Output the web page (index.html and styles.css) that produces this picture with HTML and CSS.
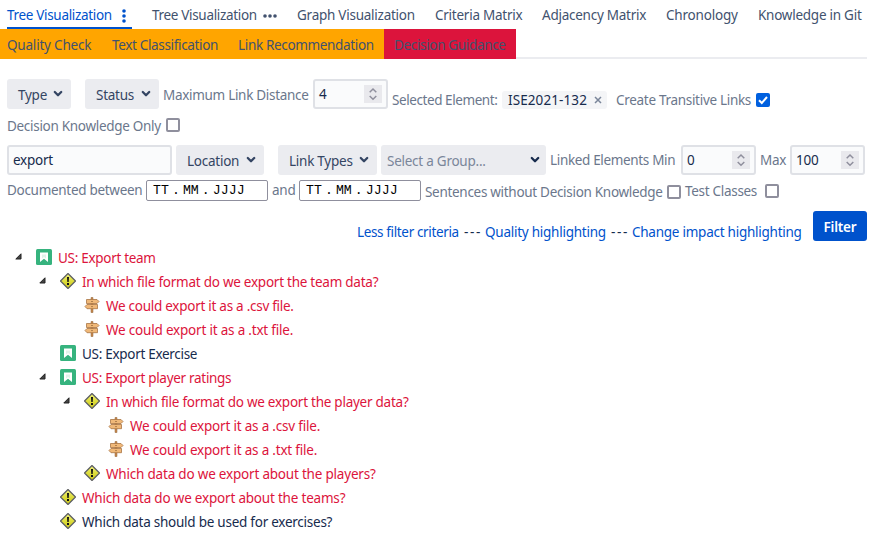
FILE: index.html
```
<!DOCTYPE html>
<html lang="en">
<head>
<meta charset="utf-8">
<title>Tree Visualization</title>
<link rel="stylesheet" href="styles.css">
</head>
<body>
<svg class="defs" width="0" height="0">
  <defs>
    <linearGradient id="yellow" x1="0" y1="0" x2="0" y2="1"><stop offset="0" stop-color="#eeee80"/><stop offset=".5" stop-color="#dede3c"/><stop offset="1" stop-color="#c9c51c"/></linearGradient>
    <symbol id="story" viewBox="0 0 16 16"><rect width="16" height="16" rx="1.5" fill="#36b37e"/><path d="M4 3.500h8v9.500L8 9.700 4 13z" fill="#fff"/><path d="M6 5.500h4v4L8 8 6 9.500z" fill="#e0f3ea"/></symbol>
    <symbol id="issue" viewBox="0 0 16 16"><path d="M8 .5 15.500 8 8 15.500.5 8z" fill="url(#yellow)" stroke="#5c5e62" stroke-width="1.200" stroke-linejoin="round"/><path d="M7 4h2l-.3 5H7.300zM7 10h2v2H7z" fill="#111"/></symbol>
    <symbol id="alt" viewBox="0 0 16 16"><path d="M7 .5h2v15H7z" fill="#c98b50" stroke="#8e6037" stroke-width=".5"/><path d="M2.500 2.500H13l2 2-2 2H2.500zM13.500 7.500H3l-2 2 2 2.200h10.500z" fill="#f0b878" stroke="#a87545" stroke-width=".8"/><path d="M7.500 4.500h1M7.500 9.600h1" stroke="#704820"/></symbol>
    <symbol id="chev" viewBox="0 0 10 8"><path d="M1.800 2 5 5.200 8.200 2" fill="none" stroke="currentColor" stroke-width="2.300" stroke-linecap="round" stroke-linejoin="round"/></symbol>
    <symbol id="spin" viewBox="0 0 18 18"><path d="M5.700 7.200 9 4l3.300 3.200M5.700 11 9 14.200l3.300-3.200" fill="none" stroke="#8f8f9d" stroke-width="1.500"/></symbol>
    <symbol id="open" viewBox="0 0 7 7"><path d="M6 .8V6H.8z" fill="#444" stroke="#222" stroke-width="1"/></symbol>
  </defs>
</svg>
<nav>
  <div class="tabs">
    <a class="tab active"><span>Tree Visualization</span><svg class="vdots" width="4" height="14"><g fill="#0052cc"><circle cx="2" cy="2" r="1.800"/><circle cx="2" cy="7" r="1.800"/><circle cx="2" cy="12" r="1.800"/></g></svg></a>
    <a class="tab t2"><span>Tree Visualization</span><svg class="hdots" width="14" height="4"><g fill="#42526e"><circle cx="2" cy="2" r="1.800"/><circle cx="7" cy="2" r="1.800"/><circle cx="12" cy="2" r="1.800"/></g></svg></a>
    <a class="tab t3">Graph Visualization</a>
    <a class="tab t4">Criteria Matrix</a>
    <a class="tab t5">Adjacency Matrix</a>
    <a class="tab t6">Chronology</a>
    <a class="tab t7">Knowledge in Git</a>
  </div>
  <div class="tabs second">
    <a class="sub s1">Quality Check</a><a class="sub s2">Text Classification</a><a class="sub s3">Link Recommendation</a><a class="sub s4">Decision Guidance</a>
  </div>
</nav>
<main>
  <div class="row ra">
    <div class="btn type">Type<svg class="chev"><use href="#chev"/></svg></div>
    <div class="btn status">Status<svg class="chev"><use href="#chev"/></svg></div>
    <label class="dist">Maximum Link Distance</label>
    <div class="field num">4<svg class="spin"><use href="#spin"/></svg></div>
    <label class="low sel">Selected Element:</label>
    <div class="tag"><span>ISE2021-132</span><svg width="8" height="8"><path d="M1 1l6 6M7 1 1 7" stroke="#7a869a" stroke-width="1.500"/></svg></div>
    <label class="low trans">Create Transitive Links</label>
    <div class="box on"><svg width="14" height="14"><path d="M3 7.200 5.800 10 11 4" fill="none" stroke="#fff" stroke-width="2"/></svg></div>
  </div>
  <div class="row rk"><label class="dko">Decision Knowledge Only</label><div class="box"></div></div>
  <div class="row rb">
    <div class="field search">export</div>
    <div class="btn loc">Location<svg class="chev"><use href="#chev"/></svg></div>
    <div class="btn types">Link Types<svg class="chev"><use href="#chev"/></svg></div>
    <div class="btn group"><span>Select a Group...</span><svg class="chev"><use href="#chev"/></svg></div>
    <label class="min">Linked Elements Min</label>
    <div class="field num">0<svg class="spin"><use href="#spin"/></svg></div>
    <label class="max">Max</label>
    <div class="field num">100<svg class="spin"><use href="#spin"/></svg></div>
  </div>
  <div class="row rc">
    <label class="doc">Documented between</label>
    <div class="date"><span>TT</span><span>.</span><span>MM</span><span>.</span><span>JJJJ</span></div>
    <label class="and">and</label>
    <div class="date"><span>TT</span><span>.</span><span>MM</span><span>.</span><span>JJJJ</span></div>
    <label class="sent">Sentences without Decision Knowledge</label>
    <div class="box b1"></div>
    <label class="test">Test Classes</label>
    <div class="box b2"></div>
  </div>
  <div class="row rd">
    <a class="less">Less filter criteria</a><i>---</i><a class="qual">Quality highlighting</a><i>---</i><a class="change">Change impact highlighting</a>
    <button>Filter</button>
  </div>
  <ul class="tree">
    <li class="l0 red"><svg class="tw"><use href="#open"/></svg><svg class="ic"><use href="#story"/></svg><span class="us">US: Export team</span></li>
    <li class="l1 red"><svg class="tw"><use href="#open"/></svg><svg class="ic"><use href="#issue"/></svg><span>In which file format do we export the team data?</span></li>
    <li class="l2 red"><b class="tw"></b><svg class="ic"><use href="#alt"/></svg><span class="csv">We could export it as a .csv file.</span></li>
    <li class="l2 red"><b class="tw"></b><svg class="ic"><use href="#alt"/></svg><span class="fit">We could export it as a .txt file.</span></li>
    <li class="l1"><b class="tw"></b><svg class="ic"><use href="#story"/></svg><span class="us">US: Export Exercise</span></li>
    <li class="l1 red"><svg class="tw"><use href="#open"/></svg><svg class="ic"><use href="#story"/></svg><span class="us">US: Export player ratings</span></li>
    <li class="l2 red"><svg class="tw"><use href="#open"/></svg><svg class="ic"><use href="#issue"/></svg><span>In which file format do we export the player data?</span></li>
    <li class="l3 red"><b class="tw"></b><svg class="ic"><use href="#alt"/></svg><span class="fit">We could export it as a .csv file.</span></li>
    <li class="l3 red"><b class="tw"></b><svg class="ic"><use href="#alt"/></svg><span class="fit">We could export it as a .txt file.</span></li>
    <li class="l2 red"><b class="tw"></b><svg class="ic"><use href="#issue"/></svg><span class="fit">Which data do we export about the players?</span></li>
    <li class="l1 red"><b class="tw"></b><svg class="ic"><use href="#issue"/></svg><span class="fit">Which data do we export about the teams?</span></li>
    <li class="l1"><b class="tw"></b><svg class="ic"><use href="#issue"/></svg><span>Which data should be used for exercises?</span></li>
  </ul>
</main>
</body>
</html>
```
FILE: styles.css
```
* { box-sizing: border-box; }
body { margin: 0; height: 533px; overflow: hidden; background: #fff; color: #172b4d; font: 13.5px/20px "Noto Sans", sans-serif; letter-spacing: -.25px; white-space: nowrap; }
.defs { display: block; height: 0; }
nav { color: #42526e; }
.tabs { display: flex; height: 29px; padding-left: 7px; }
.tab { display: flex; height: 29px; padding-top: 5px; margin-right: 20px; }
.active { width: 125px; color: #0052cc; border-bottom: 2px solid #0052cc; justify-content: space-between; letter-spacing: -.32px; }
.vdots { margin: 4px 6px 0 0; }
.t2 { width: 125px; justify-content: space-between; letter-spacing: -.32px; }
.hdots { margin-top: 9px; }
.t3 { width: 118px; }
.t4 { width: 87px; }
.t5 { width: 104px; }
.t6 { width: 72px; letter-spacing: -.2px; }
.t7 { width: 104px; margin-right: 0; }
.second { height: 30px; width: 867px; padding: 0; background: linear-gradient(#ebecf0, #ebecf0) bottom / 100% 2px no-repeat; }
.sub { height: 30px; padding-top: 6px; background: orange; letter-spacing: -.34px; }
.s1 { width: 102px; padding-left: 7px; letter-spacing: -.2px; }
.s2 { width: 126px; padding-left: 10px; }
.s3 { width: 156px; padding-left: 10px; }
.s4 { width: 132px; padding-left: 10px; background: #dc143c; }
main { padding-top: 20px; }
.row { display: flex; align-items: flex-start; padding-left: 7px; }
label { color: #6b778c; letter-spacing: -.3px; }
.btn, .field { height: 30px; border-radius: 3px; display: flex; align-items: center; flex: none; }
.btn { background: #ebecf0; color: #344563; padding: 1px 8px 0 11px; justify-content: space-between; }
.chev { width: 10px; height: 8px; margin-bottom: 1px; }
.field { background: #fafbfc; border: 2px solid #dfe1e6; padding: 0 4px; }
.num { width: 75px; justify-content: space-between; }
.spin { width: 18px; height: 18px; background: #e9e9ed; }
.ra { height: 37px; }
.ra label { padding-top: 6px; }
.ra .low { padding-top: 11px; }
.type { width: 64px; margin-right: 14px; }
.status { width: 74px; margin-right: 4px; }
.dist { width: 150px; }
.sel { width: 110px; margin-left: 4px; letter-spacing: -.42px; }
.tag { width: 105px; height: 18px; margin: 12px 9px 0 0; padding: 0 5px 0 6px; border-radius: 3px; background: #f4f5f7; display: flex; align-items: center; justify-content: space-between; letter-spacing: .1px; }
.trans { width: 140px; }
.box { width: 14px; height: 14px; border: 2px solid #8f8f9d; border-radius: 2px; flex: none; }
.on { border: 0; background: #0060df; margin-top: 14px; }
.on svg { display: block; }
.rk { height: 29px; }
.dko { width: 159px; }
.rk .box { margin-top: 2px; }
.rb { height: 35px; }
.rb label { padding-top: 5px; }
.search { width: 165px; margin-right: 4px; }
.loc { width: 88px; margin-right: 14px; }
.types { width: 99px; margin-right: 4px; }
.group { width: 165px; margin-right: 4px; padding-left: 6px; padding-right: 6px; color: #7a869a; }
.group .chev { color: #172b4d; }
.rb .min { width: 131px; letter-spacing: -.34px; }
.max { width: 26px; margin: 0 4px; }
.rc { height: 31px; }
.doc { width: 139px; }
.date { width: 122px; height: 21px; border: 1px solid #8f8f9d; border-radius: 2px; color: #000; font: 13.200px/19px "Liberation Mono", monospace; letter-spacing: .05px; display: flex; padding-left: 6px; gap: 3px; }
.and { width: 23px; margin: 0 4px; letter-spacing: -.2px; }
.sent { width: 242px; padding-top: 2px; margin-left: 4px; }
.b1 { margin: 5px 4px 0 0; }
.test { width: 80px; padding-top: 1px; }
.b2 { margin-top: 4px; }
.rd { height: 35px; padding: 0 4px 0 357px; }
.rd a, .rd i { padding-top: 11px; color: #0052cc; }
.rd i { width: 26px; padding-left: 5px; font-style: normal; color: #172b4d; letter-spacing: 1.700px; }
.rd .less { width: 102px; letter-spacing: -.36px; }
.qual { width: 121px; }
.change { width: 169px; }
button { width: 54px; height: 30px; padding: 2px 0 0; margin-left: 12px; border: 0; border-radius: 3px; background: #0052cc; color: #fff; font: 600 13.5px "Noto Sans", sans-serif; letter-spacing: -.2px; }
.tree { margin: 0; padding: 0; list-style: none; }
li { height: 24px; display: flex; padding-left: 14px; }
.l1 { padding-left: 38px; }
.l2 { padding-left: 62px; }
.l3 { padding-left: 86px; }
.tw { width: 7px; height: 7px; margin: 7px 15px 0 1px; }
.ic { width: 16px; height: 16px; margin: 3px 6px 0 -1px; }
li span { padding-top: 2px; }
li .us { letter-spacing: -.3px; }
li .csv, li .l3 { letter-spacing: -.27px; }
li .fit { letter-spacing: -.2px; }
.red { color: #dc143c; }
```
